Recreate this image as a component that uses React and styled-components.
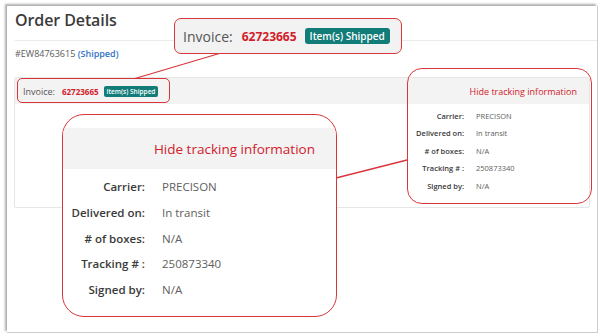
import React from 'react';
import styled, { createGlobalStyle } from 'styled-components';

const Global = createGlobalStyle`
  html, body { margin: 0; padding: 0; background: #ffffff; }
  body {
    font-family: "Open Sans", "Noto Sans", sans-serif;
    width: 600px; height: 334px; overflow: hidden;
  }
  * { box-sizing: border-box; }
`;

const RED = '#d8363b';
const RED_TEXT = '#d2202a';
const TEAL = '#127c78';

const Stage = styled.div`
  position: relative;
  width: 600px;
  height: 334px;
  padding: 6px 2px 1px 7px;
`;

const Window = styled.div`
  width: 591px;
  height: 327px;
  background: #fff;
  border-right: 1px solid #cdcdcd;
  border-bottom: 1px solid #cdcdcd;
  box-shadow: -2px -2px 2px rgba(0, 0, 0, 0.32);
  display: flex;
  flex-direction: column;
`;

const TitleBar = styled.div`
  margin-left: 8px;
  height: 35px;
  padding-top: 6px;
  border-bottom: 1px solid #ebebeb;
`;

const Title = styled.h1`
  margin: 0;
  font-size: 16px;
  line-height: 16px;
  font-weight: 600;
  color: #3b3b3b;
  letter-spacing: -0.1px;
`;

const OrderRef = styled.div`
  margin: 7px 0 0 8px;
  font-size: 9px;
  line-height: 12px;
  color: #5a5a5a;
`;

const Shipped = styled.span`
  color: #2f74c6;
  font-weight: 600;
`;

const Card = styled.div`
  margin: 17px 7px 0 7px;
  height: 131px;
  border: 1px solid #e6e6e6;
  border-radius: 2px;
  display: flex;
  flex-direction: column;
`;

const CardHeader = styled.div`
  height: 26px;
  background: #f3f3f3;
  display: flex;
  align-items: center;
  justify-content: space-between;
  padding: 0 12px 0 8px;
`;

const Invoice = styled.div`
  display: flex;
  align-items: center;
`;

const InvoiceLabel = styled.span`
  font-size: ${p => p.$size}px;
  color: #555;
`;

const InvoiceNumber = styled.span`
  font-size: ${p => p.$size}px;
  font-weight: 700;
  color: ${RED_TEXT};
  margin-left: ${p => p.$gap}px;
`;

const Badge = styled.span`
  display: inline-flex;
  align-items: center;
  background: ${TEAL};
  color: #fff;
  font-size: ${p => p.$size}px;
  font-weight: 600;
  height: ${p => p.$h}px;
  padding: 0 ${p => p.$pad}px;
  border-radius: ${p => p.$r}px;
  margin-left: ${p => p.$gap}px;
`;

const HideLink = styled.span`
  color: ${RED_TEXT};
  font-size: ${p => p.$size}px;
`;

const CardBody = styled.div`
  flex: 1;
  display: flex;
  justify-content: flex-end;
  padding-top: 4px;
`;

const Details = styled.dl`
  margin: 0;
  display: grid;
  grid-template-columns: ${p => p.$cols};
  column-gap: ${p => p.$gap}px;
  align-content: start;
  font-size: ${p => p.$size}px;
  line-height: ${p => p.$lh}px;
`;

const Term = styled.dt`
  margin: 0;
  text-align: right;
  font-weight: 600;
  color: #3a3a3a;
  white-space: nowrap;
`;

const Value = styled.dd`
  margin: 0;
  color: #606060;
  white-space: nowrap;
`;

const Overlay = styled.svg`
  position: absolute;
  left: 0;
  top: 0;
  pointer-events: none;
`;

const Highlight = styled.div`
  position: absolute;
  left: ${p => p.$x}px;
  top: ${p => p.$y}px;
  width: ${p => p.$w}px;
  height: ${p => p.$h}px;
  border: 1.3px solid ${RED};
  border-radius: ${p => p.$r}px;
  pointer-events: none;
`;

const InvoiceCallout = styled.div`
  position: absolute;
  left: 174px;
  top: 18px;
  width: 228px;
  height: 36px;
  background: #f2f2f2;
  border: 1.3px solid ${RED};
  border-radius: 7px;
  display: flex;
  align-items: center;
  padding-left: 8px;
`;

const TrackingCallout = styled.div`
  position: absolute;
  left: 62px;
  top: 114px;
  width: 275px;
  height: 203px;
  background: #fff;
  border: 1.5px solid ${RED};
  border-radius: 22px;
  overflow: hidden;
  padding-top: 13px;
`;

const ZoomHeader = styled.div`
  height: 41px;
  background: #f3f3f3;
  display: flex;
  align-items: center;
  justify-content: flex-end;
  padding-right: 21px;
`;

const ZoomBody = styled.div`
  padding-top: 5px;
`;

const rows = [
  ['Carrier:', 'PRECISON'],
  ['Delivered on:', 'In transit'],
  ['# of boxes:', 'N/A'],
  ['Tracking # :', '250873340'],
  ['Signed by:', 'N/A'],
];

const DetailList = ({ cols, gap, size, lh }) => (
  <Details $cols={cols} $gap={gap} $size={size} $lh={lh}>
    {rows.map(([k, v]) => (
      <React.Fragment key={k}>
        <Term>{k}</Term>
        <Value>{v}</Value>
      </React.Fragment>
    ))}
  </Details>
);

export default function App() {
  return (
    <>
      <Global />
      <Stage>
        <Window>
          <TitleBar>
            <Title>Order Details</Title>
          </TitleBar>
          <OrderRef>
            #EW84763615 <Shipped>(Shipped)</Shipped>
          </OrderRef>
          <Card>
            <CardHeader>
              <Invoice>
                <InvoiceLabel $size={9}>Invoice:</InvoiceLabel>
                <InvoiceNumber $size={8} $gap={7}>62723665</InvoiceNumber>
                <Badge $size={6.5} $h={11} $pad={3} $r={2} $gap={5}>Item(s) Shipped</Badge>
              </Invoice>
              <HideLink $size={9}>Hide tracking information</HideLink>
            </CardHeader>
            <CardBody>
              <DetailList cols="60px 113px" gap={12} size={7.5} lh={17.4} />
            </CardBody>
          </Card>
        </Window>

        <Highlight $x={17} $y={78} $w={153} $h={25} $r={5} />
        <Highlight $x={407} $y={68} $w={185} $h={136} $r={15} />

        <Overlay width="600" height="334" viewBox="0 0 600 334">
          <line x1="221" y1="53" x2="135" y2="78.5" stroke={RED} strokeWidth="1.3" />
          <line x1="336" y1="178" x2="407" y2="160" stroke={RED} strokeWidth="1.3" />
        </Overlay>

        <InvoiceCallout>
          <InvoiceLabel $size={14}>Invoice:</InvoiceLabel>
          <InvoiceNumber $size={12} $gap={9}>62723665</InvoiceNumber>
          <Badge $size={10} $h={16} $pad={5} $r={3} $gap={8}>Item(s) Shipped</Badge>
        </InvoiceCallout>

        <TrackingCallout>
          <ZoomHeader>
            <HideLink $size={13.5}>Hide tracking information</HideLink>
          </ZoomHeader>
          <ZoomBody>
            <DetailList cols="82px 140px" gap={17} size={11.5} lh={25.8} />
          </ZoomBody>
        </TrackingCallout>
      </Stage>
    </>
  );
}
